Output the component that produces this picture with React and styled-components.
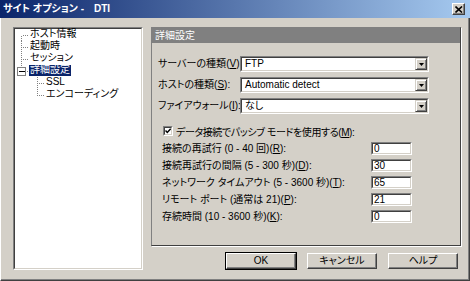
import React from "react";
import styled, { createGlobalStyle } from "styled-components";

const FONT = `"Liberation Sans", "Noto Sans CJK JP", sans-serif`;

const Global = createGlobalStyle`
  html, body { margin: 0; padding: 0; background: #d4d0c8; }
  * { box-sizing: border-box; }
`;

const Window = styled.div`
  width: 470px;
  height: 281px;
  display: flex;
  flex-direction: column;
  background: #d4d0c8;
  font-family: ${FONT};
  font-size: 10px;
  font-feature-settings: "palt";
  color: #000;
  overflow: hidden;
`;

const TitleBar = styled.div`
  height: 18px;
  flex: none;
  display: flex;
  align-items: center;
  justify-content: space-between;
  padding: 0 5px 0 3px;
  background: linear-gradient(to right, #0a246a, #a6caf0);
`;

const TitleText = styled.span`
  color: #fff;
  font-weight: bold;
  font-size: 10px;
  line-height: 12px;
  white-space: pre;
`;

const CloseButton = styled.div`
  width: 13px;
  height: 12px;
  display: flex;
  align-items: center;
  justify-content: center;
  background: #d4d0c8;
  border: 1px solid;
  border-color: #fff #404040 #404040 #fff;
  box-shadow: inset -1px -1px #808080;
`;

const Body = styled.div`
  flex: 1;
  display: flex;
  gap: 8px;
  padding: 9px 8px 10px 12px;
  border-style: solid;
  border-width: 0 1px 1px 1px;
  border-color: transparent #404040 #404040 #ffffff;
  box-shadow: inset -1px -1px #808080;
`;

const TreeOuter = styled.div`
  width: 130px;
  border: 1px solid;
  border-color: #808080 #fff #fff #808080;
`;

const TreeInner = styled.div`
  height: 100%;
  background: #fff;
  border: 1px solid;
  border-color: #404040 #d4d0c8 #d4d0c8 #404040;
  display: flex;
  flex-direction: column;
`;

const TreeRow = styled.div`
  height: 12px;
  display: flex;
  align-items: flex-start;
`;

const TreeLabel = styled.span`
  height: 11px;
  line-height: 10px;
  padding: 0 1px;
  white-space: nowrap;
  background: ${(p) => (p.$selected ? "#0a246a" : "transparent")};
  color: ${(p) => (p.$selected ? "#fff" : "#000")};
`;

const RightColumn = styled.div`
  width: 310px;
  display: flex;
  flex-direction: column;
`;

const Panel = styled.div`
  height: 219px;
  display: flex;
  flex-direction: column;
  border: 1px solid;
  border-color: #808080 #404040 #404040 #808080;
  box-shadow: 1px 1px 0 #fff;
`;

const PanelHeader = styled.div`
  height: 15px;
  line-height: 15px;
  background: #808080;
  color: #fff;
  padding-left: 3px;
`;

const PanelContent = styled.div`
  display: flex;
  flex-direction: column;
  padding-top: 13px;
`;

const ComboGroup = styled.div`
  display: flex;
  flex-direction: column;
  gap: 5px;
`;

const ComboRow = styled.div`
  height: 16px;
  display: flex;
  align-items: center;
  padding-left: 6px;
`;

const FieldLabel = styled.span`
  width: ${(p) => p.$width}px;
  white-space: nowrap;
  line-height: 12px;
`;

const SunkenOuter = styled.div`
  width: ${(p) => p.$width}px;
  height: ${(p) => p.$height}px;
  border: 1px solid;
  border-color: #808080 #fff #fff #808080;
`;

const SunkenInner = styled.div`
  height: 100%;
  background: #fff;
  border: 1px solid;
  border-color: #404040 #d4d0c8 #d4d0c8 #404040;
  display: flex;
  align-items: center;
`;

const FieldText = styled.span`
  flex: 1;
  padding-left: ${(p) => p.$pad}px;
  line-height: 10px;
  white-space: nowrap;
`;

const DropButton = styled.div`
  width: 12px;
  height: 100%;
  display: flex;
  align-items: center;
  justify-content: center;
  background: #d4d0c8;
  border: 1px solid;
  border-color: #d4d0c8 #404040 #404040 #d4d0c8;
  box-shadow: inset 1px 1px #fff, inset -1px -1px #808080;
`;

const CheckRow = styled.label`
  margin-top: 10px;
  height: 14px;
  display: flex;
  align-items: center;
  padding-left: 11px;
  gap: 3px;
  white-space: nowrap;
`;

const CheckText = styled.span`
  letter-spacing: -0.4px;
`;

const CheckOuter = styled.div`
  width: 10px;
  height: 10px;
  border: 1px solid;
  border-color: #808080 #fff #fff #808080;
`;

const CheckInner = styled.div`
  width: 100%;
  height: 100%;
  background: #fff;
  border: 1px solid;
  border-color: #404040 #d4d0c8 #d4d0c8 #404040;
  display: flex;
  align-items: center;
  justify-content: center;
`;

const NumberGroup = styled.div`
  margin-top: 4px;
  display: flex;
  flex-direction: column;
  gap: 4px;
`;

const NumberRow = styled.div`
  height: 13px;
  display: flex;
  align-items: center;
  padding-left: 10px;
`;

const ButtonRow = styled.div`
  margin-top: 6px;
  height: 18px;
  display: flex;
  justify-content: flex-end;
  gap: 9px;
  padding-right: 2px;
`;

const PushButton = styled.div`
  width: 72px;
  height: 18px;
  border: 1px solid ${(p) => (p.$default ? "#000" : "transparent")};
  display: flex;
`;

const PushFace = styled.div`
  flex: 1;
  display: flex;
  align-items: center;
  justify-content: center;
  background: #d4d0c8;
  border: 1px solid;
  border-color: #fff #404040 #404040 #fff;
  box-shadow: inset -1px -1px #808080;
  line-height: 10px;
`;

const Mn = ({ text, k }) => (
  <>
    {text}(<u>{k}</u>):
  </>
);

function Connector({ level, kind, box }) {
  const w = 14 + level * 16;
  const x = 6 + level * 16 + 0.5;
  const y = 6.5;
  const top = kind === "first" ? y : 0;
  const bottom = kind === "last" ? y : 12;
  return (
    <svg width={w} height={12} style={{ flex: "none" }} shapeRendering="crispEdges">
      {box ? (
        <>
          <line x1={x} y1={0} x2={x} y2={2} stroke="#808080" strokeDasharray="1 1" />
          <line x1={x + 5} y1={y} x2={w} y2={y} stroke="#808080" strokeDasharray="1 1" />
          <rect x={x - 4} y={2.5} width={8} height={8} fill="#fff" stroke="#808080" />
          <line x1={x - 2.5} y1={y} x2={x + 3} y2={y} stroke="#000" />
        </>
      ) : (
        <>
          <line x1={x} y1={top} x2={x} y2={bottom} stroke="#808080" strokeDasharray="1 1" />
          <line x1={x + 1} y1={y} x2={w} y2={y} stroke="#808080" strokeDasharray="1 1" />
        </>
      )}
    </svg>
  );
}

const treeItems = [
  { label: "ホスト情報", level: 0, kind: "first" },
  { label: "起動時", level: 0, kind: "middle" },
  { label: "セッション", level: 0, kind: "middle" },
  { label: "詳細設定", level: 0, kind: "last", box: true, selected: true },
  { label: "SSL", level: 1, kind: "middle" },
  { label: "エンコーディング", level: 1, kind: "last" },
];

const combos = [
  { label: "サーバーの種類", k: "V", value: "FTP" },
  { label: "ホストの種類", k: "S", value: "Automatic detect" },
  { label: "ファイアウォール", k: "I", value: "なし" },
];

const numbers = [
  { label: "接続の再試行 (0 - 40 回)", k: "R", value: "0" },
  { label: "接続再試行の間隔 (5 - 300 秒)", k: "D", value: "30" },
  { label: "ネットワーク タイムアウト (5 - 3600 秒)", k: "T", value: "65" },
  { label: "リモート ポート (通常は 21)", k: "P", value: "21" },
  { label: "存続時間 (10 - 3600 秒)", k: "K", value: "0" },
];

export default function App() {
  return (
    <>
      <Global />
      <Window>
        <TitleBar>
          <TitleText>{"サイト オプション -　DTI"}</TitleText>
          <CloseButton>
            <svg width="8" height="7" viewBox="0 0 8 7">
              <path d="M0.5 0.5 L7 6.5 M7 0.5 L0.5 6.5" stroke="#000" strokeWidth="1.6" />
            </svg>
          </CloseButton>
        </TitleBar>
        <Body>
          <TreeOuter>
            <TreeInner>
              {treeItems.map((t) => (
                <TreeRow key={t.label}>
                  <Connector level={t.level} kind={t.kind} box={t.box} />
                  <TreeLabel $selected={t.selected}>{t.label}</TreeLabel>
                </TreeRow>
              ))}
            </TreeInner>
          </TreeOuter>
          <RightColumn>
            <Panel>
              <PanelHeader>詳細設定</PanelHeader>
              <PanelContent>
                <ComboGroup>
                  {combos.map((c) => (
                    <ComboRow key={c.k}>
                      <FieldLabel $width={82}>
                        <Mn text={c.label} k={c.k} />
                      </FieldLabel>
                      <SunkenOuter $width={189} $height={16}>
                        <SunkenInner>
                          <FieldText $pad={3}>{c.value}</FieldText>
                          <DropButton>
                            <svg width="5" height="3" viewBox="0 0 5 3">
                              <path d="M0 0 H5 L2.5 3 Z" fill="#000" />
                            </svg>
                          </DropButton>
                        </SunkenInner>
                      </SunkenOuter>
                    </ComboRow>
                  ))}
                </ComboGroup>
                <CheckRow>
                  <CheckOuter>
                    <CheckInner>
                      <svg width="6" height="6" viewBox="0 0 6 6">
                        <path d="M0.5 2.5 L2.3 4.5 L5.7 0.8" stroke="#000" strokeWidth="1.5" fill="none" />
                      </svg>
                    </CheckInner>
                  </CheckOuter>
                  <CheckText>
                    <Mn text="データ接続でパッシブ モードを使用する" k="M" />
                  </CheckText>
                </CheckRow>
                <NumberGroup>
                  {numbers.map((n) => (
                    <NumberRow key={n.k}>
                      <FieldLabel $width={209}>
                        <Mn text={n.label} k={n.k} />
                      </FieldLabel>
                      <SunkenOuter $width={41} $height={13}>
                        <SunkenInner>
                          <FieldText $pad={1}>{n.value}</FieldText>
                        </SunkenInner>
                      </SunkenOuter>
                    </NumberRow>
                  ))}
                </NumberGroup>
              </PanelContent>
            </Panel>
            <ButtonRow>
              <PushButton $default>
                <PushFace>OK</PushFace>
              </PushButton>
              <PushButton>
                <PushFace>キャンセル</PushFace>
              </PushButton>
              <PushButton>
                <PushFace>ヘルプ</PushFace>
              </PushButton>
            </ButtonRow>
          </RightColumn>
        </Body>
      </Window>
    </>
  );
}
